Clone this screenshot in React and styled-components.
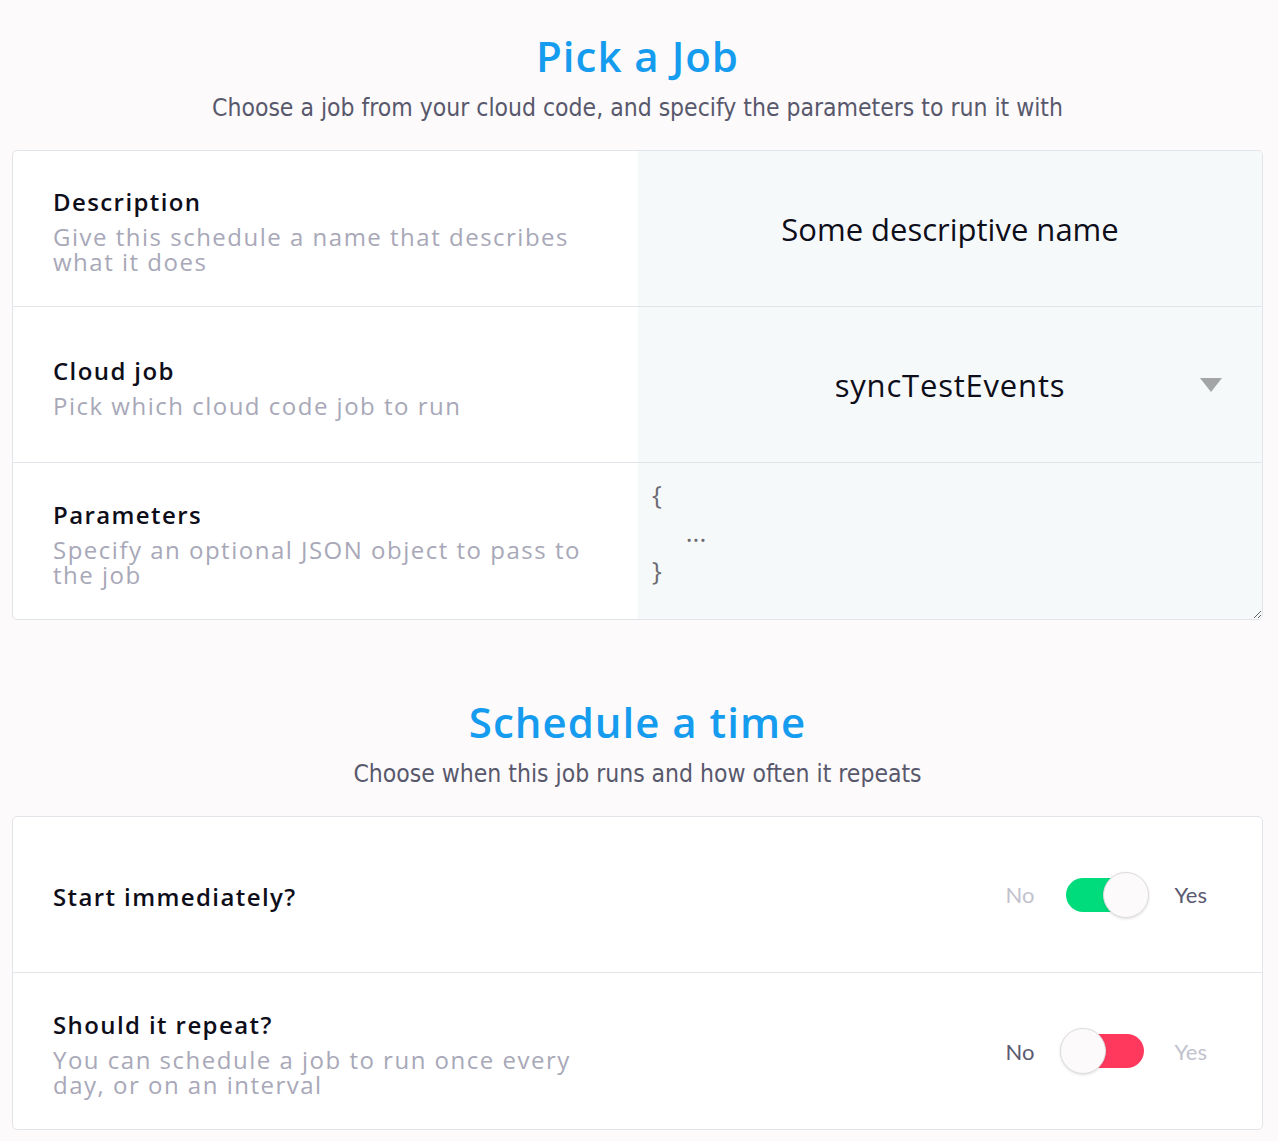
import styled, { createGlobalStyle } from 'styled-components';

const GlobalStyle = createGlobalStyle`
  html, body {
    margin: 0;
    padding: 0;
    background: #fcfafb;
  }
  body {
    font-family: "Open Sans", "Noto Sans", sans-serif;
    -webkit-font-smoothing: antialiased;
  }
  * {
    box-sizing: border-box;
  }
`;

export default function App() {
  return (
    <Page>
      <GlobalStyle />
      <Section>
        <Header>
          <Title>Pick a Job</Title>
          <Subtitle>Choose a job from your cloud code, and specify the parameters to run it with</Subtitle>
        </Header>
        <Card>
          <Row>
            <Label>
              <LabelTitle>Description</LabelTitle>
              <LabelText>Give this schedule a name that describes what it does</LabelText>
            </Label>
            <Field>
              <TextInput defaultValue="Some descriptive name" />
            </Field>
          </Row>
          <Row>
            <Label>
              <LabelTitle>Cloud job</LabelTitle>
              <LabelText>Pick which cloud code job to run</LabelText>
            </Label>
            <Field>
              <Dropdown>
                <DropdownValue>syncTestEvents</DropdownValue>
                <Arrow width="22" height="14" viewBox="0 0 22 14">
                  <polygon points="0,0 22,0 11,14" fill="#a3a5a7" />
                </Arrow>
              </Dropdown>
            </Field>
          </Row>
          <Row $last>
            <Label>
              <LabelTitle>Parameters</LabelTitle>
              <LabelText>Specify an optional JSON object to pass to the job</LabelText>
            </Label>
            <Field>
              <TextArea placeholder={'{\n     ...\n}'} />
            </Field>
          </Row>
        </Card>
      </Section>

      <Section $spaced>
        <Header>
          <Title>Schedule a time</Title>
          <Subtitle>Choose when this job runs and how often it repeats</Subtitle>
        </Header>
        <Card>
          <Row>
            <Label>
              <LabelTitle>Start immediately?</LabelTitle>
            </Label>
            <ToggleField>
              <Toggle on />
            </ToggleField>
          </Row>
          <Row $last>
            <Label>
              <LabelTitle>Should it repeat?</LabelTitle>
              <LabelText>You can schedule a job to run once every day, or on an interval</LabelText>
            </Label>
            <ToggleField>
              <Toggle on={false} />
            </ToggleField>
          </Row>
        </Card>
      </Section>
    </Page>
  );
}

function Toggle({ on }) {
  return (
    <ToggleWrap>
      <ToggleLabel $active={!on}>No</ToggleLabel>
      <Switch>
        <Track $on={on} />
        <Knob $on={on} />
      </Switch>
      <ToggleLabel $active={on}>Yes</ToggleLabel>
    </ToggleWrap>
  );
}

const Page = styled.div`
  padding: 0 15px 13px 12px;
  min-height: 100vh;
`;

const Section = styled.section`
  padding-top: ${(p) => (p.$spaced ? '77px' : '31px')};
`;

const Header = styled.header`
  text-align: center;
  margin-bottom: 27px;
`;

const Title = styled.h1`
  margin: 0;
  font-family: "Open Sans", sans-serif;
  font-weight: 600;
  font-size: 42px;
  line-height: 50px;
  color: #169cee;
  letter-spacing: 1px;
`;

const Subtitle = styled.p`
  margin: 12px 0 0;
  font-family: "Liberation Sans Narrow", "DejaVu Sans Condensed", sans-serif;
  font-weight: 400;
  font-size: 24.5px;
  line-height: 30px;
  color: #58586c;
`;

const Card = styled.div`
  background: #ffffff;
  border: 1px solid #e3e3ea;
  border-radius: 5px;
  overflow: hidden;
`;

const Row = styled.div`
  display: grid;
  grid-template-columns: 625px 1fr;
  height: 156px;
  border-bottom: ${(p) => (p.$last ? 'none' : '1px solid #e3e3ea')};
`;

const Label = styled.div`
  display: flex;
  flex-direction: column;
  justify-content: center;
  padding: 4px 40px 0;
`;

const LabelTitle = styled.div`
  font-size: 24px;
  line-height: 30px;
  font-weight: 600;
  color: #0e0e1a;
  letter-spacing: 1.4px;
`;

const LabelText = styled.div`
  margin-top: 7px;
  font-size: 24px;
  line-height: 25px;
  color: #a8a8b8;
  letter-spacing: 1.5px;
`;

const Field = styled.div`
  background: #f6f9fa;
  display: flex;
  position: relative;
`;

const TextInput = styled.input`
  flex: 1;
  border: none;
  outline: none;
  background: transparent;
  text-align: center;
  font-family: "Open Sans", sans-serif;
  font-size: 31px;
  color: #0e0e1a;
  padding: 0 20px;
`;

const Dropdown = styled.div`
  flex: 1;
  display: flex;
  align-items: center;
  justify-content: center;
`;

const DropdownValue = styled.span`
  font-size: 31px;
  letter-spacing: 0.8px;
  color: #0e0e1a;
`;

const Arrow = styled.svg`
  position: absolute;
  right: 40px;
  top: 71px;
`;

const TextArea = styled.textarea`
  flex: 1;
  border: none;
  outline: none;
  background: transparent;
  resize: vertical;
  padding: 12px 14px;
  font-family: "Open Sans", sans-serif;
  font-size: 26px;
  line-height: 38px;
  color: #555;

  &::placeholder {
    color: #6b6b73;
  }
`;

const ToggleField = styled.div`
  display: flex;
  align-items: center;
  justify-content: flex-end;
  padding-right: 55px;
`;

const ToggleWrap = styled.div`
  display: flex;
  align-items: center;
  gap: 25px;
`;

const ToggleLabel = styled.span`
  font-family: "Lato", sans-serif;
  font-size: 22px;
  color: ${(p) => (p.$active ? '#5a5a70' : '#c2c2ce')};
`;

const Switch = styled.div`
  position: relative;
  width: 90px;
  height: 48px;
`;

const Track = styled.div`
  position: absolute;
  left: 6px;
  right: 6px;
  top: 7px;
  height: 34px;
  border-radius: 17px;
  background: ${(p) => (p.$on ? '#00db7c' : '#ff395e')};
`;

const Knob = styled.div`
  position: absolute;
  top: 1px;
  left: ${(p) => (p.$on ? '43px' : '0')};
  width: 46px;
  height: 46px;
  border-radius: 50%;
  background: #fcfafb;
  border: 1px solid #dcdcdc;
  box-shadow: 0 1px 3px rgba(0, 0, 0, 0.12);
`;
